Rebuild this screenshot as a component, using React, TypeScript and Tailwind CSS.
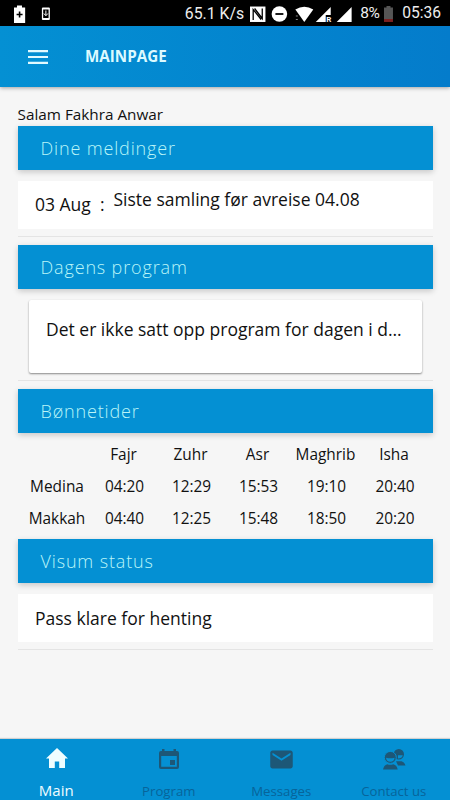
import type { ReactNode } from "react";
import { MdEmail } from "react-icons/md";

const prayerNames = ["Fajr", "Zuhr", "Asr", "Maghrib", "Isha"];

const prayerTimes = [
  { city: "Medina", times: ["04:20", "12:29", "15:53", "19:10", "20:40"] },
  { city: "Makkah", times: ["04:40", "12:25", "15:48", "18:50", "20:20"] },
];

export default function App() {
  return (
    <main className="flex h-[800px] w-[450px] flex-col overflow-hidden bg-[#f6f6f6] font-['Open_Sans',sans-serif] text-[#111]">
      <StatusBar />

      <header className="z-10 flex h-[61px] shrink-0 items-center bg-linear-to-r from-[#0490d3] to-[#047ccb] pl-7 shadow-[0_1px_4px_rgba(0,0,0,0.35)]">
        <svg width="20" height="14" viewBox="0 0 20 14" fill="#e2faff">
          <path d="M0 0h20v2.2H0zM0 5.9h20v2.2H0zM0 11.8h20V14H0z" />
        </svg>
        <h1 className="ml-[37px] text-[15.2px] font-bold text-[#dcfaff]">MAINPAGE</h1>
      </header>

      <div className="flex-1 px-[17.5px] pt-[17px]">
        <p className="h-[22px] text-[15.3px] leading-[21px]">Salam Fakhra Anwar</p>

        <SectionTitle>Dine meldinger</SectionTitle>
        <div className="mt-[11px] flex h-12 bg-white pl-[17.5px] text-[17.5px]">
          <span className="w-[78.5px] pt-[11px] leading-6 whitespace-pre">03 Aug  :</span>
          <span className="pt-[6px] leading-6">Siste samling før avreise 04.08</span>
        </div>
        <Divider />

        <SectionTitle>Dagens program</SectionTitle>
        <div className="mx-[11px] mt-[11px] h-[73px] rounded-[2px] bg-white pt-[17px] pl-[17.5px] text-[17.5px] leading-6 shadow-[0_1px_2px_rgba(0,0,0,0.45)]">
          <p className="whitespace-nowrap">Det er ikke satt opp program for dagen i d...</p>
        </div>
        <Divider />

        <SectionTitle>Bønnetider</SectionTitle>
        <div className="grid h-[106px] grid-cols-[79px_56px_78px_56px_80px_57px] grid-rows-[32px_32px_32px] pt-[6px] text-center text-[15.4px] leading-8">
          <span />
          {prayerNames.map((name) => (
            <span key={name} className="-ml-[2px]">{name}</span>
          ))}
          {prayerTimes.map((row) => (
            <PrayerRow key={row.city} city={row.city} times={row.times} />
          ))}
        </div>

        <SectionTitle>Visum status</SectionTitle>
        <div className="mt-[11px] h-12 bg-white pl-[17.5px] text-[17.5px] leading-[48px]">Pass klare for henting</div>
        <Divider />
      </div>

      <nav className="grid h-[61px] shrink-0 grid-cols-4 bg-[#0490d3] shadow-[0_-1px_1px_rgba(0,0,0,0.15)]">
        <Tab label="Main" icon={<HomeIcon />} active />
        <Tab label="Program" icon={<CalendarIcon />} />
        <Tab label="Messages" icon={<MdEmail size={27} />} />
        <Tab label="Contact us" icon={<ContactsIcon />} />
      </nav>
    </main>
  );
}

function StatusBar() {
  return (
    <div className="flex h-[26px] shrink-0 items-center bg-black pt-px pr-[9px] pl-[14px] font-[Roboto,sans-serif] text-[16px] text-[#eee]">
      <svg width="38" height="20" viewBox="0 0 38 20">
        <path d="M0 3.5h3V1.5h5v2h3.2V19H0z" fill="#fff" />
        <path d="M5.6 7.5v6M2.6 10.5h6" stroke="#000" strokeWidth="1.6" />
        <rect x="28" y="3.5" width="8" height="12.5" rx="1" fill="#fff" />
        <path d="M29.3 5.5h5.4v8.5h-5.4z" fill="#000" />
        <path d="M32 6.5v4.5M30 9.5l2 2.3 2-2.3" stroke="#fff" fill="none" />
      </svg>
      <span className="ml-[133px] w-[65px] text-[15.8px] whitespace-nowrap">65.1 K/s</span>
      <svg width="104" height="20" viewBox="0 0 104 20">
        {/* NFC */}
        <rect y="2.5" width="15.5" height="15.5" fill="#fff" />
        <path d="M3.2 16V5.5l8 10M4.6 4.5l7.7 10v-10" stroke="#000" strokeWidth="1.3" fill="none" />
        {/* do not disturb */}
        <circle cx="29.5" cy="10" r="7.8" fill="#fff" />
        <path d="M25.5 10h8" stroke="#000" strokeWidth="1.8" />
        {/* wifi */}
        <path d="M45.5 5.5Q54.5 0 63.5 5.5L54.5 18z" fill="#fff" />
        <path d="M46 12h2M46 15.5h2" stroke="#888" />
        {/* signal, roaming and home */}
        <path d="M66 18L81 3v8h-5v7z" fill="#fff" />
        <text x="76.5" y="18.5" fill="#fff" className="text-[8px] font-bold">
          R
        </text>
        <path d="M87 18L102 3v15z" fill="#fff" />
      </svg>
      <span className="ml-[7px] w-6 pt-px text-[15.5px] tracking-[-0.5px]">8%</span>
      <svg width="9" height="18" viewBox="0 0 9 18">
        <path d="M0 2.5h2.5V1h4v1.5H9V14H0z" fill="#555" />
        <path d="M0 14h9v3H0z" fill="#7c2020" />
      </svg>
      <span className="ml-[9px] text-[15.6px] whitespace-nowrap">05:36</span>
    </div>
  );
}

function SectionTitle({ children }: { children: ReactNode }) {
  return (
    <h2 className="h-[44px] bg-[#0490d3] pl-[23px] text-[18px] leading-[44px] font-light tracking-[0.85px] text-[#baf5f8] shadow-[0_2px_6px_rgba(0,0,0,0.2)]">
      {children}
    </h2>
  );
}

function Divider() {
  return <div className="mt-[7px] mb-2 h-px bg-[#e4e4e4]" />;
}

function PrayerRow({ city, times }: { city: string; times: string[] }) {
  return (
    <>
      <span>{city}</span>
      {times.map((time) => (
        <span key={time}>{time}</span>
      ))}
    </>
  );
}

function Tab({ label, icon, active }: { label: string; icon: ReactNode; active?: boolean }) {
  return (
    <div className={`flex flex-col items-center ${active ? "text-[#effdff]" : "text-[#1d5777]"}`}>
      <span className="flex h-10 items-center pl-px">{icon}</span>
      <span className={active ? "text-[15px] leading-[23px]" : "text-[13.2px] leading-[25px] text-[#07649a]"}>{label}</span>
    </div>
  );
}

function HomeIcon() {
  return (
    <svg width="22" height="24" viewBox="0 0 22 24" fill="currentColor">
      <path d="M11 1L0 11.5h3V21h5.8v-6.5h4.4V21H19v-9.5h3z" />
    </svg>
  );
}

function CalendarIcon() {
  return (
    <svg width="20" height="20" viewBox="0 0 20 20" fill="currentColor">
      <path
        fillRule="evenodd"
        d="M3 0h2.5v2h9V0H17v2h1q2 0 2 2v14q0 2-2 2H2q-2 0-2-2V4q0-2 2-2h1zM2.2 7v10.8h15.6V7zM11 11h5v5h-5z"
      />
    </svg>
  );
}

function ContactsIcon() {
  return (
    <svg width="23" height="21" viewBox="0 0 23 21" fill="currentColor">
      <circle cx="15.8" cy="5.3" r="5.2" />
      <path d="M15 6.2h4.8q-.8 3.3-4.8 3.3z" fill="#0490d3" />
      <path d="M13 12.2h5.5q3 1 4 4.3H15z" />
      <circle cx="7.3" cy="8.4" r="6" stroke="#0490d3" />
      <path d="M3 8.8q4.3 1 8.6 0-.5 4-4.3 4T3 8.8z" fill="#0490d3" />
      <path d="M0 20.5q.8-4.2 4.3-5.3 3 1.3 6 0 3.7 1.1 4.4 5.3z" />
    </svg>
  );
}
